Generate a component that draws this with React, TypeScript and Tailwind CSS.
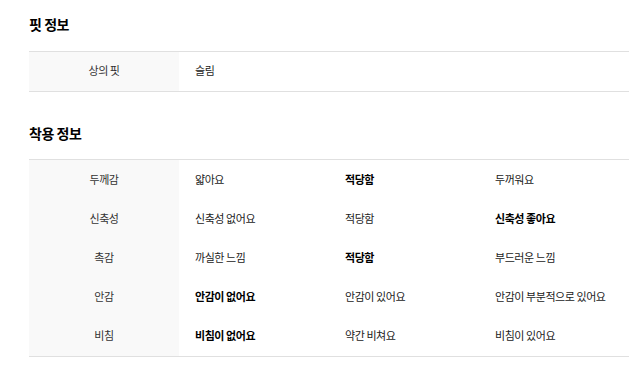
const fitRows = [{ label: '상의 핏', values: [{ text: '슬림', bold: false }] }];

const wearRows = [
  {
    label: '두께감',
    values: [
      { text: '얇아요', bold: false },
      { text: '적당함', bold: true },
      { text: '두꺼워요', bold: false },
    ],
  },
  {
    label: '신축성',
    values: [
      { text: '신축성 없어요', bold: false },
      { text: '적당함', bold: false },
      { text: '신축성 좋아요', bold: true },
    ],
  },
  {
    label: '촉감',
    values: [
      { text: '까실한 느낌', bold: false },
      { text: '적당함', bold: true },
      { text: '부드러운 느낌', bold: false },
    ],
  },
  {
    label: '안감',
    values: [
      { text: '안감이 없어요', bold: true },
      { text: '안감이 있어요', bold: false },
      { text: '안감이 부분적으로 있어요', bold: false },
    ],
  },
  {
    label: '비침',
    values: [
      { text: '비침이 없어요', bold: true },
      { text: '약간 비쳐요', bold: false },
      { text: '비침이 있어요', bold: false },
    ],
  },
];

type Row = { label: string; values: { text: string; bold: boolean }[] };

function InfoTable({ rows }: { rows: Row[] }) {
  return (
    <div className="border-y border-[#e0e0e0]">
      {rows.map((row) => (
        <div key={row.label} className="grid grid-cols-[150px_150px_150px_150px] h-[39.2px]">
          <div className="flex items-center justify-center bg-[#f9f9f9] pb-[2px] text-[#333]">
            {row.label}
          </div>
          {row.values.map((v, i) => (
            <div
              key={i}
              className={`flex items-center whitespace-pre pb-[2px] pl-4 ${v.bold ? 'font-bold text-black' : 'text-[#222]'}`}
            >
              {v.text}
            </div>
          ))}
        </div>
      ))}
    </div>
  );
}

export default function App() {
  return (
    <div
      className="min-h-screen bg-white pt-[14px] text-[11px] tracking-[-0.04em]"
      style={{ fontFamily: '"Noto Sans CJK KR", "Noto Sans", sans-serif' }}
    >
      <div className="ml-[29px] w-[600px]">
        <h2 className="text-[14px] font-bold leading-[21px] text-black">핏 정보</h2>
        <div className="mt-[16px]">
          <InfoTable rows={fitRows} />
        </div>

        <h2 className="mt-[31px] text-[14px] font-bold leading-[21px] text-black">착용 정보</h2>
        <div className="mt-[15px]">
          <InfoTable rows={wearRows} />
        </div>
      </div>
    </div>
  );
}
